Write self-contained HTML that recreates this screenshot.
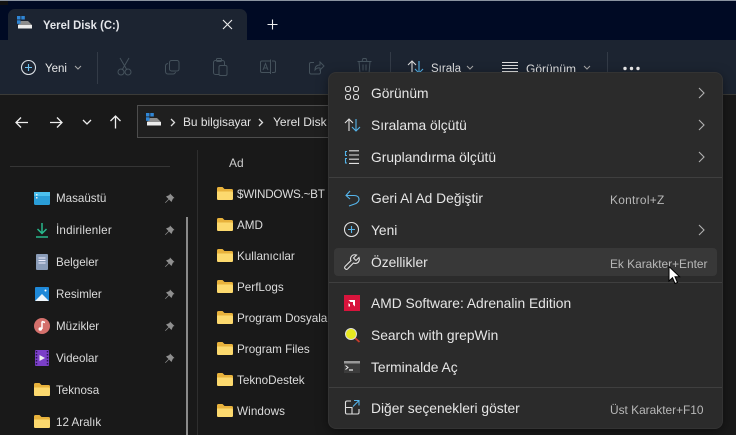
<!DOCTYPE html>
<html lang="tr"><head><meta charset="utf-8"><title>Yerel Disk (C:)</title>
<style>
html,body{margin:0;padding:0;width:736px;height:435px;overflow:hidden;background:#191919}
body{position:relative;font-family:"Liberation Sans",sans-serif;color:#e8e8e8;font-size:12px;filter:blur(.3px)}
.a{position:absolute}
.t{position:absolute;white-space:nowrap;line-height:16px;height:16px}
svg{position:absolute;overflow:visible;fill:none}
.m{font-size:13.8px;color:#e6e6e6;left:371px;margin-top:1px}
.s{font-size:11.9px;color:#b8b8b8;left:610px;margin-top:1px}
.sep{position:absolute;left:329px;width:393px;height:1px;background:#3f3f3f}
.f{color:#dcdcdc;left:237px;font-size:11.7px}
.n{color:#dcdcdc;left:56px;font-size:11.6px;margin-top:1px}
.d{stroke:#45525c;stroke-width:1}
.w{stroke:#e0e0e0;stroke-width:1.1}
.b{stroke:#55b4ea;stroke-width:1.1}
</style></head><body>
<svg style="position:absolute;width:0;height:0"><defs>
<g id="fo"><path d="M0 1.500Q0 0 1.500 0H5.500L7.500 2H14.500Q16 2 16 3.500V11.500Q16 13 14.500 13H1.500Q0 13 0 11.500Z" fill="#e8b23c"/><path d="M0 4.500H14.500Q16 4.500 16 6V11.500Q16 13 14.500 13H1.500Q0 13 0 11.500Z" fill="#fcd96e"/></g>
<g id="pin"><path d="M6 .5L10.500 5L9 5.500L7.500 9L5 6.500L1.500 10L1 9.500L4.500 6L2 3.500L5.500 2Z" fill="#8f8f8f"/></g>
<g id="disk"><path d="M6 5H11L15 9H1L4 5Z" fill="#8d8d8d"/><rect x="1" y="9" width="14" height="3.500" fill="#ececec"/><rect x="0" y="0" width="3.500" height="3.500" fill="#2f86d6"/><rect x="4.300" y="0" width="3.500" height="3.500" fill="#2f86d6"/><rect x="0" y="4.300" width="3.500" height="3.500" fill="#2f86d6"/></g>
</defs></svg>
<div class="a" style="left:0;top:0;width:736px;height:40px;background:#000a24"></div>
<div class="a" style="left:0;top:0;width:736px;height:1px;background:#8a93a0"></div>
<div class="a" style="left:0;top:1px;width:8px;height:4px;background:#111"></div>
<div class="a" style="left:8px;top:9px;width:239px;height:31px;background:#1c2431;border-radius:7px 7px 0 0"></div>
<div class="a" style="left:0;top:40px;width:736px;height:54px;background:#1c2431"></div>
<div class="a" style="left:0;top:94px;width:736px;height:1px;background:#3b3b38"></div>

<svg style="left:17px;top:16px" width="16" height="14"><use href="#disk"/></svg>
<div class="t" style="left:43px;top:17px;font-size:12px;font-weight:bold;color:#e4e6ea;transform:scaleX(.94);transform-origin:0 0">Yerel Disk (C:)</div>
<svg style="left:222px;top:19px" width="12" height="12"><path d="M1 1L10 10M10 1L1 10" stroke="#eee" stroke-width="1.1"/></svg>
<svg style="left:267px;top:19px" width="12" height="12"><path d="M5.500 .5V10.500M.5 5.500H10.500" stroke="#eee" stroke-width="1.1"/></svg>

<svg style="left:21px;top:60px" width="16" height="16"><circle cx="7.500" cy="7.500" r="7" stroke="#d8dde2" stroke-width="1.1"/><path d="M7.500 4V11M4 7.500H11" stroke="#6cc0ee" stroke-width="1.1"/></svg>
<div class="t" style="left:45px;top:60.500px;font-size:11.5px;color:#e8e8e8">Yeni</div>
<svg style="left:74px;top:65px" width="8" height="6"><path d="M1 1L4 4L7 1" stroke="#aaa"/></svg>
<div class="a" style="left:97px;top:52px;width:1px;height:32px;background:#333b47"></div>
<svg style="left:117px;top:58px" width="15" height="18"><path class="d" d="M3 0L10 12M12 0L5 12"/><circle class="d" cx="4" cy="14" r="3"/><circle class="d" cx="11" cy="14" r="3"/></svg>
<svg style="left:165px;top:60px" width="15" height="15"><rect class="d" x="4.500" y=".5" width="9.500" height="10.500" rx="2"/><path class="d" d="M3 3.500Q.5 4 .5 6V11Q.5 14 3 14H8Q10 14 10.500 12"/></svg>
<svg style="left:213px;top:58px" width="15" height="18"><rect class="d" x=".5" y="2.500" width="11" height="14" rx="2"/><rect class="d" x="3.500" y=".5" width="5" height="3" rx="1"/><rect class="d" x="6" y="7.500" width="8" height="10" rx="1.500" fill="#1c2431"/></svg>
<svg style="left:260px;top:59px" width="16" height="15"><path class="d" d="M10 2H2Q.5 2 .5 3.500V12Q.5 13.500 2 13.500H10M10.500 .5V15M12 2H14Q15.500 2 15.500 3.500V12Q15.500 13.500 14 13.500H12M3 11L5.500 4.500L8 11M4 9H7"/></svg>
<svg style="left:309px;top:60px" width="15" height="15"><path class="d" d="M5 2.500H2Q.5 2.500 .5 4V12Q.5 14 2 14H10Q11.500 14 11.500 12V10M6 10Q6 5 11 5V2L15 6L11 10V8Q8 7.500 6 10Z"/></svg>
<svg style="left:357px;top:58px" width="15" height="17"><path class="d" d="M.5 3.500H14.500M5 3.500L6 .5H9L10 3.500M2 3.500L3 15.500H12L13 3.500M6 6.500V12.500M9 6.500V12.500"/></svg>
<div class="a" style="left:390px;top:52px;width:1px;height:20px;background:#333b47"></div>
<svg style="left:407px;top:60px" width="18" height="14"><path d="M5 13V1M1 5L5 1L9 5" stroke="#d8d8d8" stroke-width="1.1"/><path d="M12 1V13M8 9L12 13L16 9" stroke="#55b4ea" stroke-width="1.1"/></svg>
<div class="t" style="left:431px;top:60.500px;font-size:11.500px;color:#e0e0e0">Sırala</div>
<svg style="left:466px;top:65px" width="8" height="6"><path d="M1 1L4 4L7 1" stroke="#aaa"/></svg>
<svg style="left:502px;top:62px" width="16" height="10"><path d="M0 .5H16M0 3.500H16M0 6.500H16M0 9.500H16" stroke="#ddd"/></svg>
<div class="t" style="left:526px;top:60.500px;font-size:12px;color:#e0e0e0">Görünüm</div>
<svg style="left:583px;top:65px" width="8" height="6"><path d="M1 1L4 4L7 1" stroke="#aaa"/></svg>
<div class="a" style="left:607px;top:52px;width:1px;height:20px;background:#333b47"></div>
<svg style="left:623px;top:65.500px" width="17" height="5"><circle cx="2" cy="2.500" r="1.700" fill="#eee"/><circle cx="8.500" cy="2.500" r="1.700" fill="#eee"/><circle cx="15" cy="2.500" r="1.700" fill="#eee"/></svg>

<svg style="left:15px;top:116px" width="14" height="13"><path d="M13 6.500H1M6 1.500L1 6.500L6 11.500" stroke="#eee" stroke-width="1.300"/></svg>
<svg style="left:49px;top:116px" width="14" height="13"><path d="M1 6.500H13M8 1.500L13 6.500L8 11.500" stroke="#eee" stroke-width="1.300"/></svg>
<svg style="left:82px;top:119px" width="10" height="7"><path d="M1 1L5 5L9 1" stroke="#eee" stroke-width="1.300"/></svg>
<svg style="left:109px;top:115px" width="13" height="14"><path d="M6.500 13.500V1M1.500 6L6.500 1L11.500 6" stroke="#eee" stroke-width="1.300"/></svg>
<div class="a" style="left:137px;top:105px;width:200px;height:33px;border:1px solid #4d4d4d;box-sizing:border-box;background:#1f1f1f"></div>
<svg style="left:146px;top:113px" width="16" height="14"><use href="#disk"/></svg>
<svg style="left:170px;top:118px" width="6" height="9"><path d="M1 1L4.500 4.500L1 8" stroke="#ddd" stroke-width="1.300"/></svg>
<div class="t" style="left:183px;top:114px;font-size:11.9px;color:#e4e4e4">Bu bilgisayar</div>
<svg style="left:258px;top:118px" width="6" height="9"><path d="M1 1L4.500 4.500L1 8" stroke="#ddd" stroke-width="1.300"/></svg>
<div class="t" style="left:273px;top:114px;color:#e4e4e4">Yerel Disk (</div>

<div class="a" style="left:10px;top:166px;width:160px;height:1px;background:#353535"></div>
<div class="a" style="left:186px;top:217px;width:2px;height:218px;background:#8a8a8a"></div>
<div class="a" style="left:197px;top:150px;width:1px;height:285px;background:#2e2e2e"></div>

<svg style="left:34px;top:192px" width="16" height="13"><rect width="16" height="13" rx="1.500" fill="#2a9ed8"/><rect y="0" width="16" height="4" fill="#4cc0ee"/><rect x="2" y="2" width="1.500" height="1.500" fill="#eee"/><rect x="2" y="5" width="1.500" height="1.500" fill="#eee"/></svg>
<div class="t n" style="top:190px">Masaüstü</div>
<svg style="left:36px;top:223px" width="12" height="15"><path d="M6 0V10M1.500 6L6 10.500L10.500 6" stroke="#28b88c" stroke-width="1.500"/><path d="M0 14H12" stroke="#28b88c" stroke-width="1.500"/></svg>
<div class="t n" style="top:222px;letter-spacing:.2px">İndirilenler</div>
<svg style="left:36px;top:254px" width="12" height="16"><rect width="12" height="16" rx="1" fill="#8a9cb8"/><path d="M2.500 4H9.500M2.500 6.500H9.500M2.500 9H9.500" stroke="#eef"/></svg>
<div class="t n" style="top:254px">Belgeler</div>
<svg style="left:35px;top:287px" width="14" height="14"><rect width="14" height="14" rx="1" fill="#1e88d8"/><path d="M0 14L7 7L14 14Z" fill="#eef6fc"/><circle cx="10.500" cy="3.500" r="1" fill="#fff"/></svg>
<div class="t n" style="top:286px">Resimler</div>
<svg style="left:34px;top:318px" width="16" height="16"><circle cx="8" cy="8" r="8" fill="#d4706c"/><path d="M8 3.500V11" stroke="#fff" stroke-width="1.500"/><path d="M8 3.500L11 4.500" stroke="#fff" stroke-width="1.500"/><circle cx="6.300" cy="11" r="1.800" fill="#fff"/></svg>
<div class="t n" style="top:318px">Müzikler</div>
<svg style="left:35px;top:350px" width="14" height="16"><rect width="14" height="16" rx="1" fill="#7b3fc8"/><path d="M4.500 5L10 8L4.500 11Z" fill="#eee"/><path d="M1.500 1V15M12.500 1V15" stroke="#2a1650" stroke-width="1.500" stroke-dasharray="1.500 1.500"/></svg>
<div class="t n" style="top:350px">Videolar</div>
<svg style="left:34px;top:383px" width="16" height="14"><use href="#fo"/></svg>
<div class="t n" style="top:382px">Teknosa</div>
<svg style="left:34px;top:415px" width="16" height="14"><use href="#fo"/></svg>
<div class="t n" style="top:414px">12 Aralık</div>

<svg style="left:164px;top:193px" width="11" height="11"><use href="#pin"/></svg>
<svg style="left:164px;top:225px" width="11" height="11"><use href="#pin"/></svg>
<svg style="left:164px;top:257px" width="11" height="11"><use href="#pin"/></svg>
<svg style="left:164px;top:289px" width="11" height="11"><use href="#pin"/></svg>
<svg style="left:164px;top:321px" width="11" height="11"><use href="#pin"/></svg>
<svg style="left:164px;top:353px" width="11" height="11"><use href="#pin"/></svg>

<div class="t" style="left:229px;top:155px;color:#ccc">Ad</div>
<svg style="left:217px;top:187px" width="16" height="14"><use href="#fo"/></svg><div class="t f" style="top:187px;letter-spacing:-.25px">$WINDOWS.~BT</div>
<svg style="left:217px;top:218px" width="16" height="14"><use href="#fo"/></svg><div class="t f" style="top:218px">AMD</div>
<svg style="left:217px;top:249px" width="16" height="14"><use href="#fo"/></svg><div class="t f" style="top:249px">Kullanıcılar</div>
<svg style="left:217px;top:280px" width="16" height="14"><use href="#fo"/></svg><div class="t f" style="top:280px">PerfLogs</div>
<svg style="left:217px;top:311px" width="16" height="14"><use href="#fo"/></svg><div class="t f" style="top:311px">Program Dosyala</div>
<svg style="left:217px;top:342px" width="16" height="14"><use href="#fo"/></svg><div class="t f" style="top:342px">Program Files</div>
<svg style="left:217px;top:373px" width="16" height="14"><use href="#fo"/></svg><div class="t f" style="top:373px">TeknoDestek</div>
<svg style="left:217px;top:404px" width="16" height="14"><use href="#fo"/></svg><div class="t f" style="top:404px;letter-spacing:.1px">Windows</div>

<div class="a" style="left:329px;top:73px;width:393px;height:355px;background:#2b2b2b;border-radius:7px;box-shadow:0 0 0 1px #333,0 3px 12px rgba(0,0,0,.5)"></div>
<div class="a" style="left:334px;top:248px;width:383px;height:28px;background:#383838;border-radius:4px"></div>
<div class="sep" style="top:177px"></div><div class="sep" style="top:282px"></div><div class="sep" style="top:387px"></div>

<svg style="left:345px;top:86px" width="14" height="14"><rect class="w" x=".5" y=".5" width="5" height="5" rx="2.200"/><rect class="w" x="8.500" y=".5" width="5" height="5" rx="2.200"/><rect class="w" x=".5" y="8.500" width="5" height="5" rx="2.200"/><rect class="w" x="8.500" y="8.500" width="5" height="5" rx="2.200"/></svg>
<div class="t m" style="top:85px">Görünüm</div>
<svg style="left:344px;top:118px" width="17" height="14"><path class="w" d="M5 13V1M1 5L5 1L9 5"/><path class="b" d="M12 1V13M8 9L12 13L16 9"/></svg>
<div class="t m" style="top:117px">Sıralama ölçütü</div>
<svg style="left:345px;top:150px" width="14" height="14"><path class="w" d="M4 .8H14M4 5H14M4 9.200H14M4 13.400H14"/><path class="b" d="M2 1.500H.5V5.500H2M2 8.500H.5V13H2"/></svg>
<div class="t m" style="top:149px">Gruplandırma ölçütü</div>
<svg style="left:698px;top:87px" width="7" height="12"><path d="M1 1L6 6L1 11" stroke="#b0b0b0" stroke-width="1.100"/></svg>
<svg style="left:698px;top:119px" width="7" height="12"><path d="M1 1L6 6L1 11" stroke="#b0b0b0" stroke-width="1.100"/></svg>
<svg style="left:698px;top:151px" width="7" height="12"><path d="M1 1L6 6L1 11" stroke="#b0b0b0" stroke-width="1.100"/></svg>

<svg style="left:345px;top:190px" width="15" height="17"><path class="b" d="M5 1L1 5.500L5 9M1 5.500H9Q14 5.500 14 9.500Q14 11.500 11 13.500L4 16"/></svg>
<div class="t m" style="top:190px">Geri Al Ad Değiştir</div>
<div class="t s" style="top:191px;letter-spacing:.3px">Kontrol+Z</div>
<svg style="left:344px;top:222px" width="15" height="15"><circle class="w" cx="7.500" cy="7.500" r="7"/><path class="b" d="M7.500 4V11M4 7.500H11"/></svg>
<div class="t m" style="top:222px">Yeni</div>
<svg style="left:698px;top:224px" width="7" height="12"><path d="M1 1L6 6L1 11" stroke="#b0b0b0" stroke-width="1.100"/></svg>
<svg style="left:344px;top:254px" width="16" height="16"><path class="w" d="M15 3.500L12 6.500L9.500 4L12.500 1Q8.500 0 7 3Q6 5 7 6.500L1 12.500Q0 14 1.500 15Q3 16 4 14.500L9.500 9Q12 10 14 8.500Q16 6.500 15 3.500Z"/></svg>
<div class="t m" style="top:254px">Özellikler</div>
<div class="t s" style="top:255px">Ek Karakter+Enter</div>

<svg style="left:344px;top:295px" width="16" height="16"><rect width="16" height="16" fill="#d8143c"/><path d="M4.500 5H11V11.500L9 9.500V7H6.500ZM4.500 11.500V8L6 9.500V11.500Z" fill="#fff"/></svg>
<div class="t m" style="top:295px">AMD Software: Adrenalin Edition</div>
<svg style="left:345px;top:328px" width="15" height="15"><path d="M10 10L14.500 14" stroke="#c83c2c" stroke-width="1.800"/><circle cx="6" cy="6" r="5.500" fill="#e8e820" stroke="#ddd" stroke-width="1"/></svg>
<div class="t m" style="top:327px">Search with grepWin</div>
<svg style="left:344px;top:361px" width="16" height="12"><rect width="16" height="12" fill="#3c3c3c"/><rect width="16" height="2.500" fill="#999"/><path d="M1.500 4.500L4 6.500L1.500 8.500" stroke="#eee" stroke-width="1"/><path d="M5 9H9" stroke="#eee" stroke-width="1.200"/></svg>
<div class="t m" style="top:359px">Terminalde Aç</div>
<svg style="left:345px;top:400px" width="15" height="15"><path class="w" d="M6 1H2Q.5 1 .5 2.500V12.500Q.5 14 2 14H12.500Q14 14 14 12.500V9M.5 7.500H7V14"/><path class="b" d="M9 .5H14V5.500M14 .5L8 6.500"/></svg>
<div class="t m" style="top:400px">Diğer seçenekleri göster</div>
<div class="t s" style="top:401px">Üst Karakter+F10</div>

<svg style="left:668px;top:266px" width="12" height="19"><path d="M1 .5V15L4.500 11.700L7 17.500L9.500 16.500L7 10.700H11.500Z" fill="#fff" stroke="#000" stroke-width="1"/></svg>
</body></html>
